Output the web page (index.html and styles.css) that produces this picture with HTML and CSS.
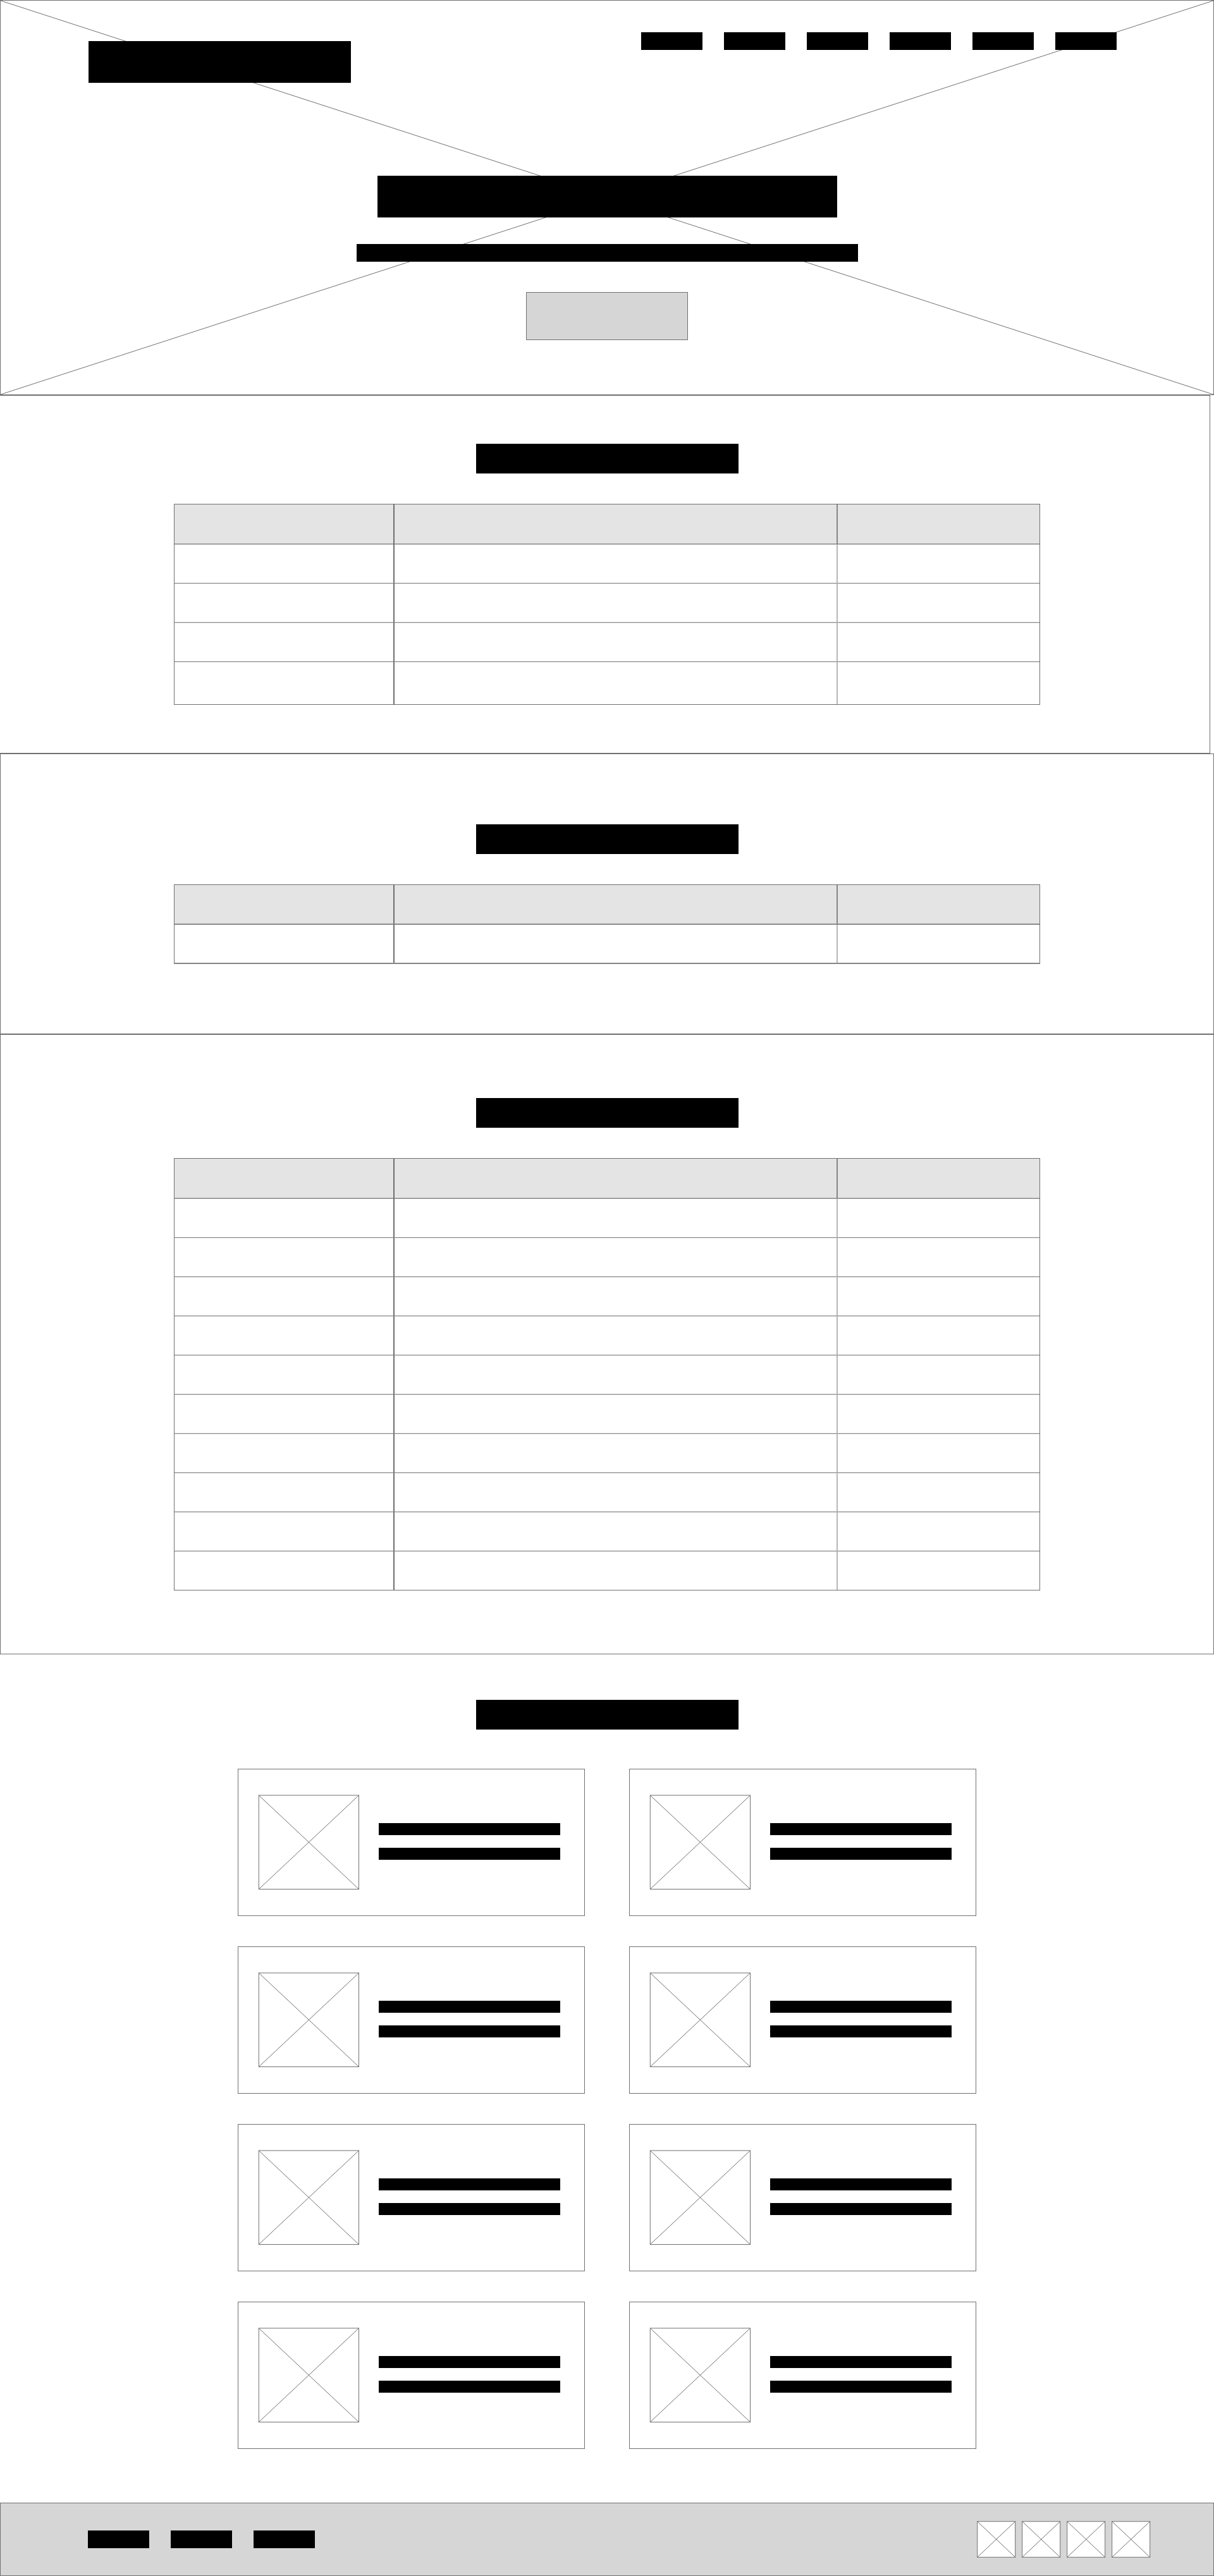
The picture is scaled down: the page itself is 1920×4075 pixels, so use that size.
FILE: index.html
```html
<!DOCTYPE html>
<html lang="en">
<head>
<meta charset="utf-8">
<meta name="viewport" content="width=device-width, initial-scale=1">
<title>Wireframe</title>
<link rel="stylesheet" href="styles.css">
</head>
<body>
<svg class="defs" width="0" height="0" aria-hidden="true">
  <symbol id="picture" viewBox="0 0 160 150" overflow="visible">
    <rect x="0.3" y="1" width="158.2" height="148.5" fill="#fff" stroke="#707070"/>
    <path d="M0.3 1L158.5 149.5M158.5 1L0.3 149.5" fill="none" stroke="#707070"/>
  </symbol>
  <symbol id="social" viewBox="0 0 61 58" overflow="visible">
    <rect x="0.7" y="0.7" width="60" height="56.6" fill="#fff" stroke="#707070"/>
    <path d="M0.7 0.7L60.7 57.3M60.7 0.7L0.7 57.3" fill="none" stroke="#707070"/>
  </symbol>
</svg>

<header class="hero">
  <svg class="hero-cross" aria-hidden="true">
    <line x1="0" y1="0" x2="100%" y2="100%"/>
    <line x1="100%" y1="0" x2="0" y2="100%"/>
  </svg>
  <div class="topbar">
    <a class="logo" href="#top" aria-label="Home"></a>
    <nav class="links" aria-label="Main">
      <a href="#s1" aria-label="Link 1"></a>
      <a href="#s2" aria-label="Link 2"></a>
      <a href="#s3" aria-label="Link 3"></a>
      <a href="#s4" aria-label="Link 4"></a>
      <a href="#s5" aria-label="Link 5"></a>
      <a href="#s6" aria-label="Link 6"></a>
    </nav>
  </div>
  <div class="intro">
    <h1 class="title" aria-label="Title"></h1>
    <p class="subtitle"></p>
    <button class="action" type="button" aria-label="Action"></button>
  </div>
</header>

<main>
  <section class="panel panel-first" id="s1">
    <h2 class="heading" aria-label="Section 1"></h2>
    <table class="grid">
      <colgroup><col class="col-a"><col class="col-b"><col class="col-c"></colgroup>
      <thead><tr><th></th><th></th><th></th></tr></thead>
      <tbody>
        <tr><td></td><td></td><td></td></tr>
        <tr><td></td><td></td><td></td></tr>
        <tr><td></td><td></td><td></td></tr>
        <tr class="tall"><td></td><td></td><td></td></tr>
      </tbody>
    </table>
  </section>

  <section class="panel panel-second" id="s2">
    <h2 class="heading" aria-label="Section 2"></h2>
    <table class="grid">
      <colgroup><col class="col-a"><col class="col-b"><col class="col-c"></colgroup>
      <thead><tr><th></th><th></th><th></th></tr></thead>
      <tbody>
        <tr><td></td><td></td><td></td></tr>
      </tbody>
    </table>
  </section>

  <section class="panel panel-third" id="s3">
    <h2 class="heading" aria-label="Section 3"></h2>
    <table class="grid">
      <colgroup><col class="col-a"><col class="col-b"><col class="col-c"></colgroup>
      <thead><tr><th></th><th></th><th></th></tr></thead>
      <tbody>
        <tr><td></td><td></td><td></td></tr>
        <tr><td></td><td></td><td></td></tr>
        <tr><td></td><td></td><td></td></tr>
        <tr><td></td><td></td><td></td></tr>
        <tr><td></td><td></td><td></td></tr>
        <tr><td></td><td></td><td></td></tr>
        <tr><td></td><td></td><td></td></tr>
        <tr><td></td><td></td><td></td></tr>
        <tr><td></td><td></td><td></td></tr>
        <tr><td></td><td></td><td></td></tr>
      </tbody>
    </table>
  </section>

  <section class="people" id="s4">
    <h2 class="heading" aria-label="Section 4"></h2>
    <div class="cards">
      <article class="card"><svg class="picture"><use href="#picture"/></svg><div class="lines"><p></p><p></p></div></article>
      <article class="card"><svg class="picture"><use href="#picture"/></svg><div class="lines"><p></p><p></p></div></article>
      <article class="card"><svg class="picture"><use href="#picture"/></svg><div class="lines"><p></p><p></p></div></article>
      <article class="card"><svg class="picture"><use href="#picture"/></svg><div class="lines"><p></p><p></p></div></article>
      <article class="card"><svg class="picture"><use href="#picture"/></svg><div class="lines"><p></p><p></p></div></article>
      <article class="card"><svg class="picture"><use href="#picture"/></svg><div class="lines"><p></p><p></p></div></article>
      <article class="card"><svg class="picture"><use href="#picture"/></svg><div class="lines"><p></p><p></p></div></article>
      <article class="card"><svg class="picture"><use href="#picture"/></svg><div class="lines"><p></p><p></p></div></article>
    </div>
  </section>
</main>

<footer class="footer">
  <nav class="links" aria-label="Footer">
    <a href="#f1" aria-label="Footer link 1"></a>
    <a href="#f2" aria-label="Footer link 2"></a>
    <a href="#f3" aria-label="Footer link 3"></a>
  </nav>
  <div class="socials">
    <a href="#n1" aria-label="Social 1"><svg class="social"><use href="#social"/></svg></a>
    <a href="#n2" aria-label="Social 2"><svg class="social"><use href="#social"/></svg></a>
    <a href="#n3" aria-label="Social 3"><svg class="social"><use href="#social"/></svg></a>
    <a href="#n4" aria-label="Social 4"><svg class="social"><use href="#social"/></svg></a>
  </div>
</footer>
</body>
</html>
```
FILE: styles.css
```css
:root {
  --line: #707070;
  --ink: #000;
  --fill: #d6d6d6;
  --head: #e4e4e4;
}

* {
  box-sizing: border-box;
  margin: 0;
  padding: 0;
}

body {
  background: #fff;
  font-family: "Liberation Sans", Arial, sans-serif;
}

.defs {
  position: absolute;
}

/* Hero */

.hero {
  position: relative;
  border: 1px solid var(--line);
  padding: 50px 153px 86px 139px;
}

.hero-cross {
  position: absolute;
  inset: 0;
  width: 100%;
  height: 100%;
}

.hero-cross line {
  stroke: var(--line);
  stroke-width: 1;
}

.topbar {
  position: relative;
  display: flex;
  justify-content: space-between;
  align-items: flex-start;
}

.logo {
  width: 415px;
  height: 66px;
  margin-top: 14px;
  background: var(--ink);
}

.links {
  display: flex;
  gap: 34px;
}

.links a {
  width: 97px;
  height: 28px;
  background: var(--ink);
}

.intro {
  position: relative;
  display: flex;
  flex-direction: column;
  align-items: center;
  /* centres on the window, not on the uneven side padding */
  margin-right: -14px;
  padding-top: 147px;
}

.title {
  width: 727px;
  height: 66px;
  background: var(--ink);
}

.subtitle {
  width: 793px;
  height: 28px;
  margin-top: 42px;
  background: var(--ink);
}

.action {
  width: 256px;
  height: 76px;
  margin-top: 48px;
  border: 1px solid var(--line);
  background: var(--fill);
}

/* Table sections */

.panel {
  display: flex;
  flex-direction: column;
  align-items: center;
  border: 1px solid var(--line);
}

.panel-first {
  margin-right: 6px;
  border-left: 0;
  padding: 76px 0 76px 7px;
}

.panel-second {
  padding: 111px 0 110px;
}

.panel-third {
  padding: 100px 0;
}

.heading {
  width: 415px;
  height: 47px;
  background: var(--ink);
}

.grid {
  width: 1370px;
  margin-top: 48px;
  border: 1px solid var(--line);
  border-spacing: 0;
  table-layout: fixed;
}

.col-a { width: 348px; }
.col-b { width: 701px; }

.grid th {
  height: 63px;
  border-bottom: 1px solid var(--line);
  background: var(--head);
}

.grid td {
  height: 62px;
  border-bottom: 1px solid #8c8c8c;
}

.grid tr > :nth-child(1) { border-right: 2px solid var(--line); }
.grid td:nth-child(2) { border-right: 2px solid #b7b7b7; }
.grid th:nth-child(2) { border-right: 2px solid #858585; }

.grid td { box-shadow: inset 0 1px #dcdcdc; }
.grid tbody tr:last-child td { height: 61px; border-bottom: 0; }
.grid tbody .tall:last-child td { height: 67px; }

.panel-second .grid {
  border-bottom: 2px solid #858585;
}

.panel-second .grid th {
  border-bottom: 2px solid #8b8b8b;
}

.panel-second .grid tbody tr:last-child td {
  height: 60px;
  box-shadow: none;
}

/* Cards */

.people {
  display: flex;
  flex-direction: column;
  align-items: center;
  padding: 72px 0 85px;
}

.cards {
  display: grid;
  grid-template-columns: 549px 549px;
  gap: 48px 70px;
  margin-top: 62px;
}

.card {
  display: flex;
  align-items: flex-start;
  gap: 30px;
  padding: 40px 38px 41px 32px;
  border: 1px solid var(--line);
}

.picture {
  flex: none;
  width: 160px;
  height: 150px;
  overflow: visible;
}

.lines {
  flex: 1;
  display: grid;
  gap: 20px;
  padding-top: 45px;
}

.lines p {
  height: 19px;
  background: var(--ink);
}

/* Footer */

.footer {
  display: flex;
  justify-content: space-between;
  align-items: center;
  padding: 28px 100px 28px 138px;
  border: 1px solid var(--line);
  background: var(--fill);
}

.socials {
  display: flex;
  gap: 10px;
}

.social {
  display: block;
  width: 61px;
  height: 58px;
  overflow: visible;
}
```
